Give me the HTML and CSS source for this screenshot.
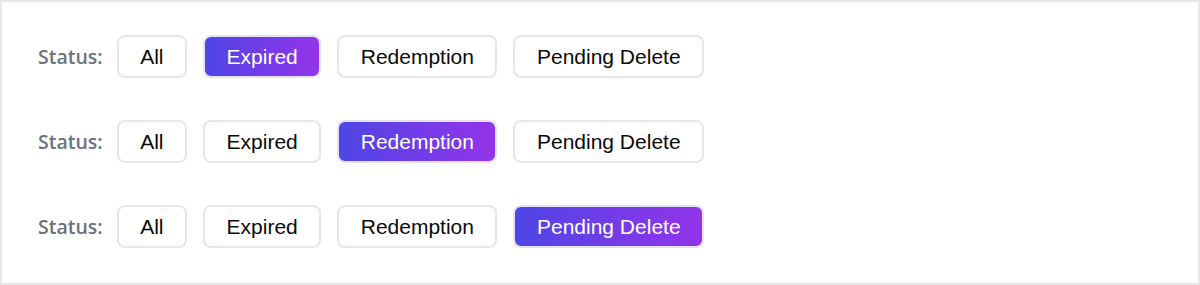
FILE: index.html
```html
<!DOCTYPE html>
<html>
<head>
<meta charset="utf-8">
<link rel="stylesheet" href="styles.css">
</head>
<body>
<div class="card">
  <div class="row">
    <span class="label">Status:</span>
    <button class="chip">All</button>
    <button class="chip active">Expired</button>
    <button class="chip">Redemption</button>
    <button class="chip">Pending Delete</button>
  </div>
  <div class="row">
    <span class="label">Status:</span>
    <button class="chip">All</button>
    <button class="chip">Expired</button>
    <button class="chip active">Redemption</button>
    <button class="chip">Pending Delete</button>
  </div>
  <div class="row">
    <span class="label">Status:</span>
    <button class="chip">All</button>
    <button class="chip">Expired</button>
    <button class="chip">Redemption</button>
    <button class="chip active">Pending Delete</button>
  </div>
</div>
</body>
</html>
```
FILE: styles.css
```css
html, body {
  margin: 0;
  padding: 0;
  background: #ffffff;
}
.card {
  box-sizing: border-box;
  width: 1200px;
  height: 285px;
  border: 2px solid #e5e7eb;
  padding: 33px 36px;
  display: flex;
  flex-direction: column;
  gap: 42px;
}
.row {
  display: flex;
  align-items: center;
  gap: 16px;
  height: 43px;
}
.label {
  font-family: "Open Sans", sans-serif;
  font-weight: 600;
  font-size: 19.5px;
  color: #6b7280;
  margin-right: -2px;
}
.chip {
  box-sizing: border-box;
  height: 43px;
  padding: 0 21.5px;
  border: 2px solid #e5e7eb;
  border-radius: 8px;
  background: #ffffff;
  color: #0a0a0a;
  font-family: "Liberation Sans", Arial, sans-serif;
  font-size: 21px;
  line-height: 1;
  cursor: pointer;
}
.chip.active {
  background: linear-gradient(90deg, #4f46e5, #9333ea);
  color: #ffffff;
  border-color: #e4e2f5;
}
```
